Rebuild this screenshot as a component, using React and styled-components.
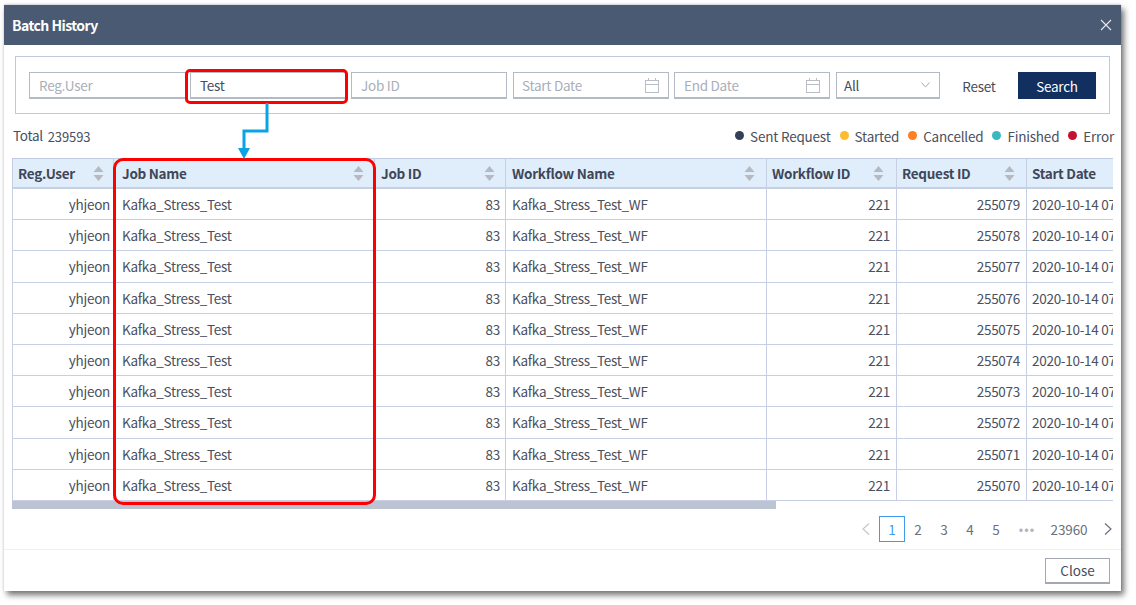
import React from "react";
import styled, { createGlobalStyle } from "styled-components";

const Global = createGlobalStyle`
  html, body { margin: 0; padding: 0; background: #fff; }
  body { font-family: "Noto Sans CJK KR", "Noto Sans", sans-serif; color: #4a5060; }
  * { box-sizing: border-box; }
`;
const Page = styled.div`
  width: 1136px; height: 605px; padding: 5px 0 0 4px; overflow: hidden;
`;
const Modal = styled.div`
  position: relative; width: 1117px; height: 586px; background: #fff;
  box-shadow: 3px 4px 6px rgba(0,0,0,.55), 0 -1px 2px rgba(0,0,0,.15);
  display: flex; flex-direction: column;
`;
const Header = styled.div`
  height: 40px; flex: none; background: #4a5a73; color: #fff; display: flex;
  align-items: center; justify-content: space-between; padding: 0 9px 0 8px;
`;
const Title = styled.div`font-size: 14px; font-weight: 700; letter-spacing: -.55px;`;
const Body = styled.div`flex: 1; padding: 11px 8px 0 8px; display: flex; flex-direction: column; min-height: 0;`;
const FilterBox = styled.div`
  margin: 0 3px 0 3px; height: 58px; border: 1px solid #bccadb; padding: 15px 13px 0 13px;
  display: flex; align-items: flex-start;
`;
const Field = styled.div`
  width: ${p => p.$w}px; margin-right: ${p => p.$gap}px; height: 27px; flex: none;
  border: 1px solid #b4bac4; border-bottom-width: 2px; background: #fff;
  display: flex; align-items: center; justify-content: space-between;
  padding: 0 9px 0 ${p => p.$pl ?? 9}px; font-size: 13.5px; letter-spacing: -.25px;
  color: ${p => p.$filled ? "#474d5c" : "#a9aeb8"};
`;
const ResetButton = styled.div`
  width: 78px; flex: none; height: 27px; font-size: 13.5px; color: #474d5c;
  display: flex; align-items: center; justify-content: center; letter-spacing: -.25px;
`;
const SearchButton = styled.div`
  width: 78px; flex: none; height: 27px; background: #12305f; color: #fff; font-size: 13.5px;
  display: flex; align-items: center; justify-content: center; letter-spacing: -.25px;
`;
const InfoRow = styled.div`
  height: 44px; display: flex; align-items: center; justify-content: space-between;
  padding: 0 0 1px 0; font-size: 13.5px; width: 1101px;
`;
const Total = styled.div`display: flex; gap: 5px; align-items: baseline; color: #3f4f66; letter-spacing: -.3px; position: relative; top: -1px; left: 1px;`;
const TotalCount = styled.span`font-size: 13px; letter-spacing: -.1px; color: #4a5060; position: relative; top: 1px;`;
const Legend = styled.div`display: flex; gap: 9px; white-space: nowrap; letter-spacing: -.2px; margin-right: -1px;`;
const LegendItem = styled.div`display: flex; align-items: center; gap: 6px; color: #4a5060;`;
const Dot = styled.span`width: 9px; height: 9px; border-radius: 50%; background: ${p => p.$c};`;
const TableWrap = styled.div`width: 1101px; overflow: hidden; border-top: 1px solid #bfcbe0; border-left: 1px solid #c6cfe3; flex: none;`;
const Grid = styled.div`
  display: grid; width: 1300px; grid-template-columns: 101px 261px 131px 261px 130px 130px 286px;
`;
const HeadCell = styled.div`
  height: 30px; background: #dfeefa; border-right: 1px solid #c6cfe3; border-bottom: 2px solid #c6cfe3;
  display: flex; align-items: center; justify-content: space-between;
  padding: 0 ${p => p.$pr}px 0 ${p => p.$pl}px;
  font-size: 13.5px; font-weight: 700; color: #3f4659; letter-spacing: -.28px; white-space: nowrap;
`;
const Cell = styled.div`
  height: 31.2px; border-right: 1px solid #c6cfe3; border-bottom: 1px solid #c6cfe3;
  display: flex; align-items: center; font-size: 13.5px; color: #4a5060; letter-spacing: -.28px; white-space: nowrap;
  justify-content: ${p => p.$pr !== undefined ? "flex-end" : "flex-start"};
  padding: 0 ${p => p.$pr ?? 0}px 0 ${p => p.$pl ?? 0}px;
`;
const ScrollThumb = styled.div`height: 8px; width: 764px; background: #bcc4d4; flex: none;`;
const Pager = styled.div`
  display: flex; align-items: center; justify-content: flex-end; height: 26px; margin-top: 7px;
  width: 1101px; font-size: 13.5px; color: #6a7080; flex: none;
`;
const PageBtn = styled.div`
  width: 26px; height: 26px; display: flex; align-items: center; justify-content: center; flex: none;
  border: 1px solid ${p => p.$active ? "#3f9bf0" : "transparent"};
  color: ${p => p.$active ? "#3f9bf0" : "#6a7080"};
`;
const Ellipsis = styled.div`width: 36px; text-align: center; color: #b0b4bc; letter-spacing: 1px; font-size: 13px;`;
const LastPage = styled.div`width: 48px; text-align: center; letter-spacing: -.1px;`;
const Arrow = styled.div`
  width: ${p => p.$w}px; height: 26px; display: flex; align-items: center; justify-content: center;
  flex: none; margin: ${p => p.$m || 0};
`;
const Footer = styled.div`
  height: 42px; flex: none; border-top: 1px solid #eff0f2; display: flex; align-items: center;
  justify-content: flex-end; padding: 0 11px 0 0;
`;
const CloseButton = styled.div`
  width: 65px; height: 26px; border: 1px solid #a3a8b3; border-bottom-width: 2px;
  display: flex; align-items: center; justify-content: center; font-size: 13.5px; color: #474d5c;
`;
const Highlight = styled.div`
  position: absolute; border: 3px solid #f00; border-radius: ${p => p.$r}px; pointer-events: none;
  left: ${p => p.$x}px; top: ${p => p.$y}px; width: ${p => p.$w}px; height: ${p => p.$h}px;
`;
const Connector = styled.svg`position: absolute; left: 230px; top: 97px; overflow: visible;`;

const Sort = () => (
  <svg width="11" height="15" viewBox="0 0 11 15">
    <path d="M5.5 0 L10.5 6 H0.5Z M0.5 9 H10.5 L5.5 15Z" fill="#b5bac2" />
  </svg>
);
const Calendar = () => (
  <svg width="14" height="15" viewBox="0 0 14 15" fill="none" stroke="#b9bdc5" strokeWidth="1">
    <rect x=".5" y="2.5" width="13" height="12" />
    <path d="M.5 6.5H13.5M3.5 0V3M10.5 0V3" />
  </svg>
);
const Chevron = () => (
  <svg width="9" height="6" viewBox="0 0 9 6" fill="none" stroke="#a5aab3" strokeWidth="1"><path d="M.5.5 4.5 5 8.5.5" /></svg>
);
const PageArrow = ({ dir, color }) => (
  <svg width="8" height="12" viewBox="0 0 8 12" fill="none" stroke={color} strokeWidth="1.2">
    <path d={dir === "l" ? "M7 .5 1 6l6 5.5" : "M1 .5 7 6l-6 5.5"} />
  </svg>
);

const heads = [
  ["Reg.User", 5, 9], ["Job Name", 8, 10], ["Job ID", 6, 10], ["Workflow Name", 6, 11],
  ["Workflow ID", 5, 12], ["Request ID", 5, 11], ["Start Date", 5, 0],
];
const requests = [255079, 255078, 255077, 255076, 255075, 255074, 255073, 255072, 255071, 255070];
const legend = [["Sent Request", "#353f55"], ["Started", "#fdbb2d"], ["Cancelled", "#fd7e23"], ["Finished", "#3ab8c2"], ["Error", "#c8102e"]];

export default function App() {
  return (
    <Page>
      <Global />
      <Modal>
        <Header>
          <Title>Batch History</Title>
          <svg width="12" height="12" viewBox="0 0 12 12" stroke="#e6e9ee" strokeWidth="1.1"><path d="M1 1 11 11M11 1 1 11" /></svg>
        </Header>
        <Body>
          <FilterBox>
            <Field $w={157} $gap={4} $pl={9}>Reg.User</Field>
            <Field $w={156} $gap={5} $filled>Test</Field>
            <Field $w={156} $gap={6}>Job ID</Field>
            <Field $w={156} $gap={5} $pl={8}>Start Date<Calendar /></Field>
            <Field $w={156} $gap={6} $pl={9}>End Date<Calendar /></Field>
            <Field $w={104} $gap={0} $filled $pl={7}>All<Chevron /></Field>
            <ResetButton>Reset</ResetButton>
            <SearchButton>Search</SearchButton>
          </FilterBox>
          <InfoRow>
            <Total>Total <TotalCount>239593</TotalCount></Total>
            <Legend>
              {legend.map(([t, c]) => <LegendItem key={t}><Dot $c={c} />{t}</LegendItem>)}
            </Legend>
          </InfoRow>
          <TableWrap>
            <Grid>
              {heads.map(([h, pl, pr], i) => (
                <HeadCell key={h} $pl={pl} $pr={pr}>{h}{i < 6 && <Sort />}</HeadCell>
              ))}
              {requests.map(r => (
                <React.Fragment key={r}>
                  <Cell $pr={3}>yhjeon</Cell>
                  <Cell $pl={8}>Kafka_Stress_Test</Cell>
                  <Cell $pr={5}>83</Cell>
                  <Cell $pl={6}>Kafka_Stress_Test_WF</Cell>
                  <Cell $pr={6}>221</Cell>
                  <Cell $pr={6}>{r}</Cell>
                  <Cell $pl={5}>2020-10-14 07:12:31</Cell>
                </React.Fragment>
              ))}
            </Grid>
          </TableWrap>
          <ScrollThumb />
          <Pager>
            <Arrow $w={24} $m="0 1px 0 0"><PageArrow dir="l" color="#c4c8ce" /></Arrow>
            <PageBtn $active>1</PageBtn>
            <PageBtn>2</PageBtn>
            <PageBtn>3</PageBtn>
            <PageBtn>4</PageBtn>
            <PageBtn>5</PageBtn>
            <Ellipsis>•••</Ellipsis>
            <LastPage>23960</LastPage>
            <Arrow $w={10} $m="0 0 0 10px"><PageArrow dir="r" color="#6a7080" /></Arrow>
          </Pager>
        </Body>
        <Footer><CloseButton>Close</CloseButton></Footer>
        <Highlight $x={181} $y={64} $w={163} $h={35} $r={5} />
        <Highlight $x={109} $y={153} $w={263} $h={347} $r={10} />
        <Connector width="40" height="60">
          <path d="M33 1V29H10V48" fill="none" stroke="#0aa3e6" strokeWidth="3" />
          <path d="M4 46H16L10 57Z" fill="#0aa3e6" />
        </Connector>
      </Modal>
    </Page>
  );
}
